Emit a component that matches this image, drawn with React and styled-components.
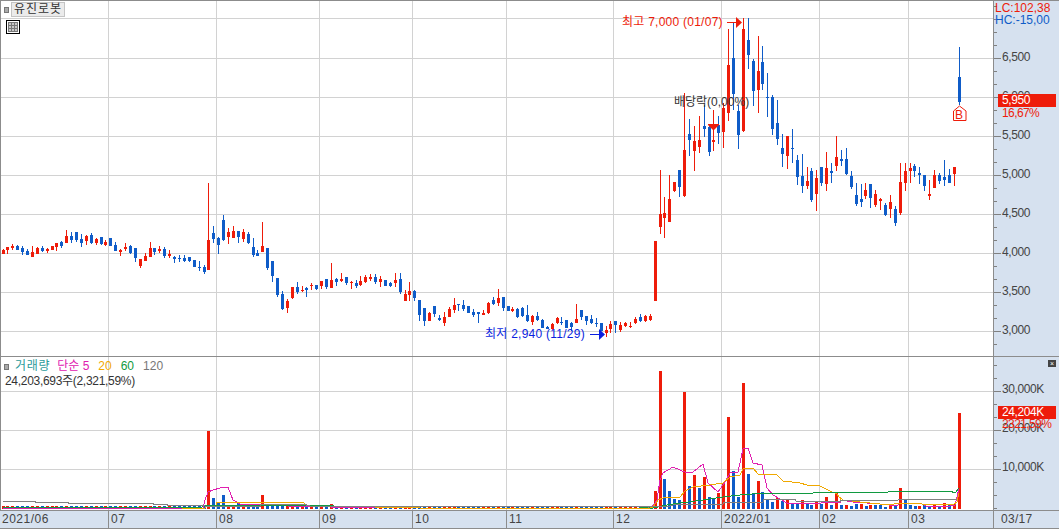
import React from "react";
import styled, { createGlobalStyle } from "styled-components";

const RED = "#ee1c0a";
const BLUE = "#0f5cc8";
const GRID = "#d2d2d2";
const EDGE = "#8c8c8c";
const AXIS_BG = "#d6e1ef";

const Global = createGlobalStyle`
  html, body { margin: 0; padding: 0; background: #fff; overflow: hidden; }
`;

const zoomed = (ox, oy, rows) =>
  rows.map(([z, c, wt, bt, bb, wb]) => ({
    x: ox + Math.floor(z / 3),
    c,
    wt: oy + Math.round(wt / 3),
    bt: oy + Math.round(bt / 3),
    bb: oy + Math.round(bb / 3),
    wb: oy + Math.round(wb / 3),
  }));
const direct = (rows) => rows.map(([x, c, wt, bt, bb, wb]) => ({ x, c, wt, bt, bb, wb }));

const candles = [
  ...zoomed(0, 180, [
    [10,"R",207,209,222,222],[22,"R",201,201,210,221],[37,"R",192,197,205,209],[52,"B",195,197,210,211],
    [67,"B",198,204,216,224],[82,"B",208,212,225,225],[97,"R",198,216,231,231],[112,"R",202,204,222,222],
    [127,"B",198,204,214,216],[142,"R",204,207,213,218],[157,"R",198,198,210,210],[170,"R",189,189,201,212],
    [185,"B",183,186,198,204],[199,"R",150,168,189,189],[214,"B",156,168,180,189],[229,"B",156,156,180,186],
    [244,"B",162,177,189,201],[259,"R",165,168,183,195],[274,"B",159,165,189,192],[289,"R",174,177,189,195],
    [304,"B",171,171,192,195],[316,"R",180,186,195,198],[331,"B",174,174,198,198],[346,"B",186,195,213,213],
    [361,"R",207,210,216,228],[376,"R",189,201,207,213],[391,"B",195,198,219,222],[406,"B",204,204,234,246],
    [421,"R",237,237,258,264],[436,"R",219,228,243,243],[451,"R",186,204,231,231],[463,"B",204,204,216,225],
    [478,"R",198,207,213,219],[493,"B",201,207,228,234],[508,"R",210,222,228,234],[523,"B",228,231,237,249],
    [538,"B",225,234,237,246],[553,"B",225,234,243,246],[568,"B",231,231,243,246],[583,"B",240,240,261,261],
    [598,"B",243,261,264,273],[613,"B",255,261,276,282],[625,"R",10,180,270,270],[640,"B",138,159,177,189],
    [655,"B",171,174,195,222],[670,"B",105,120,180,183],[685,"R",144,156,171,192],[700,"R",138,153,174,174],
    [715,"B",153,153,171,189],[730,"R",147,156,177,186],[745,"B",156,162,189,192],[760,"B",174,201,225,231],
    [772,"B",210,219,228,228],[787,"R",126,198,216,216],[802,"B",204,204,264,270],[817,"B",243,243,288,306],
    [832,"B",294,294,345,351],[847,"B",333,342,387,390],[862,"R",357,363,384,399],[877,"R",321,321,354,357],
    [892,"B",306,321,336,342],[907,"R",318,330,333,336],[919,"B",321,324,330,351],[934,"R",309,315,318,330],
    [949,"B",315,315,327,330],[964,"R",303,303,318,327],[979,"B",297,297,321,327],[994,"R",249,300,324,324],
    [1009,"B",294,297,306,318],
  ]),
  ...zoomed(330, 250, [
    [34,"R",69,87,93,96],[49,"B",81,81,99,105],[64,"R",93,96,96,117],[79,"B",90,99,108,114],[91,"R",78,93,105,108],
    [106,"R",75,81,96,99],[121,"R",72,81,87,93],[136,"B",72,81,96,102],[151,"R",78,87,96,111],[166,"B",90,90,108,108],
    [181,"B",96,99,108,111],[196,"R",69,90,99,111],[211,"B",69,87,126,132],[226,"R",120,132,153,153],[238,"R",96,123,135,153],
    [253,"B",120,123,144,153],[268,"B",150,150,195,213],[283,"B",174,174,213,228],[298,"R",186,189,213,213],[313,"B",168,168,192,201],
    [328,"B",195,204,210,213],[343,"R",186,201,219,228],[358,"R",171,177,201,201],[373,"R",144,165,180,189],[385,"B",162,162,165,183],
    [400,"B",150,165,177,183],[415,"B",168,168,189,189],[430,"B",177,186,195,201],[445,"B",186,186,192,219],[460,"R",180,189,195,195],
    [475,"R",156,159,189,192],[490,"B",141,150,162,165],[505,"R",117,144,159,168],[520,"B",141,141,174,183],[535,"B",168,168,183,183],
    [547,"R",171,177,183,186],[562,"B",174,177,201,204],[577,"B",171,174,198,201],[592,"B",165,195,213,216],[607,"R",195,198,216,225],
    [622,"B",186,198,210,213],[637,"B",207,210,234,234],[652,"B",228,231,237,237],[667,"R",219,222,237,240],[682,"R",201,204,219,222],
    [694,"B",201,216,219,225],[709,"B",210,210,234,234],[724,"B",216,219,231,243],[739,"R",162,207,219,219],[754,"B",180,180,201,210],
    [769,"B",198,198,213,225],[784,"B",195,207,219,222],[799,"B",204,219,222,231],[814,"B",219,219,243,243],[829,"R",228,240,249,261],
    [841,"R",213,222,237,249],[856,"B",213,213,225,249],[871,"R",216,225,240,246],[886,"R",216,219,228,231],[901,"R",216,228,231,234],
    [916,"R",201,207,219,222],[931,"B",192,201,213,216],[946,"R",195,198,213,216],[961,"R",192,198,210,213],
  ]),
  ...direct([
    [655,"R",241,241,301,301],[660,"R",170,214,227,234],[664,"R",197,213,218,238],[669,"R",175,199,222,222],
    [674,"R",182,182,191,192],[679,"B",170,170,187,197],[684,"R",93,150,196,197],[689,"B",119,134,140,156],
    [694,"R",126,141,151,171],[699,"R",116,140,147,153],[704,"B",105,126,129,137],[709,"B",126,127,152,156],
    [713,"R",110,140,142,151],[718,"B",116,125,133,144],[723,"R",103,108,132,148],[728,"R",29,65,113,121],
    [733,"B",22,58,94,110],[738,"B",105,111,135,149],[743,"R",18,29,131,132],[748,"B",18,40,55,69],
    [753,"B",59,61,91,106],[758,"R",36,71,90,113],[762,"B",46,62,84,90],[767,"B",73,97,98,117],
    [772,"B",95,97,129,135],[777,"B",100,123,139,145],[782,"B",134,148,154,167],[787,"R",136,136,156,169],
    [792,"B",129,148,149,163],[797,"B",155,160,177,185],[802,"B",154,176,186,193],[807,"R",167,181,186,189],
  ]),
  ...zoomed(780, 0, [
    [94,"B",504,513,600,606],[109,"R",510,534,582,633],[124,"B",501,501,549,558],[139,"R",456,504,552,573],
    [154,"B",489,513,519,549],[169,"R",408,471,498,513],[184,"B",450,477,483,498],[199,"B",444,477,522,525],
    [214,"B",513,528,561,567],[229,"B",549,585,612,618],[244,"B",552,597,606,621],[256,"R",549,570,588,597],
    [271,"B",552,552,594,624],[286,"R",570,582,615,621],[301,"R",594,597,603,630],[316,"B",609,615,645,648],
    [331,"R",585,606,627,654],[346,"B",618,627,669,678],[361,"R",489,546,639,645],[376,"R",489,513,549,573],
    [391,"R",489,504,513,549],[403,"B",492,498,513,531],[418,"B",501,519,525,552],[433,"B",525,525,558,573],
    [448,"R",540,582,588,600],[463,"R",510,525,564,564],[478,"B",519,525,543,552],[493,"B",480,531,540,558],
    [508,"B",507,525,549,549],[523,"R",501,501,522,558],[538,"B",141,231,306,315],
  ]),
];

const earlyVolume = { 42: 431, 43: 498, 44: 503, 45: 495, 46: 505, 48: 503, 53: 495, 54: 504, 57: 505, 60: 505, 67: 504 };
const volumeBars = [
  ...candles.slice(0, 133).map((k, i) => ({
    x: k.x,
    c: k.c,
    top: earlyVolume[i] ?? 506,
  })),
  ...[
    [76,"R",393],[91,"R",33],[103,"B",357],[118,"B",393],[133,"B",417],[148,"B",420],[163,"R",96],[178,"B",378],
    [193,"R",345],[208,"B",384],[223,"R",351],[238,"B",411],[250,"B",417],[265,"R",399],[280,"R",372],[295,"R",171],
    [310,"B",333],[325,"B",411],[340,"R",69],[355,"B",342],[370,"B",399],[385,"R",363],[397,"B",396],[412,"B",417],
    [427,"B",426],[442,"R",414],[457,"B",423],[472,"R",420],[487,"B",429],[502,"B",432],[517,"R",420],[532,"B",429],
    [544,"B",435],[559,"R",423],[574,"B",432],[589,"R",411],[604,"B",435],[619,"R",399],[634,"B",435],[649,"R",435],
  ].map(([z, c, t]) => ({ x: 630 + Math.floor(z / 3), c, top: 360 + Math.round(t / 3) })),
  ...[
    [33,"B",468],[48,"B",462],[63,"R",462],[78,"B",468],[90,"R",465],[105,"B",465],[120,"B",465],[135,"B",470],
    [150,"R",465],[165,"B",465],[180,"R",414],[195,"B",450],[210,"B",465],[225,"B",468],[238,"R",468],[253,"B",465],
    [268,"B",470],[283,"R",465],[298,"B",468],[313,"R",459],[328,"B",465],[343,"R",462],[358,"R",189],
  ].map(([z, c, t]) => ({ x: 840 + Math.floor(z / 3), c, top: 350 + Math.round(t / 3) })),
];

const pts = (arr) => arr.map(([x, y]) => `${x},${y}`).join(" ");
const z5 = (rows) => rows.map(([z, y]) => [Math.round(630 + z / 3), y]);
const z6 = (rows) => rows.map(([z, y]) => [Math.round(840 + z / 3), y]);

const averages = [
  {
    color: "#e020b0",
    line: [
      [3,508],[190,508],[203,508],[205,500],[208,492],[213,490],[220,488],[228,487],[233,500],[240,504],[283,504],[287,506],[330,507],[400,508],[650,508],
      ...z5([[65,507],[80,500],[90,480],[100,473],[130,467],[170,473],[190,472],[220,464],[235,483],[265,492],[285,482],[300,473],[325,472],[340,449],[355,448],[370,463],[395,465],[410,488],[430,495],[470,503],[550,504],[600,502],[630,502]]),
      ...z6([[0,500],[40,502],[120,504],[170,506],[180,503],[240,503],[265,507],[330,506],[345,505],[350,497],[358,488]]),
    ],
  },
  {
    color: "#f0a800",
    line: [
      [182,508],[205,508],[207,505],[216,505],[217,502],[303,502],[306,505],[330,506],[420,508],[650,508],
      ...z5([[70,507],[85,500],[100,498],[150,497],[165,491],[190,487],[240,485],[280,483],[300,477],[330,475],[340,469],[370,468],[385,474],[440,475],[460,481],[510,483],[530,485],[570,486],[600,491],[620,494],[630,498]]),
      ...z6([[0,497],[10,500],[60,502],[120,504],[150,505],[175,503],[245,504],[340,505],[350,502],[358,493]]),
    ],
  },
  {
    color: "#109a40",
    line: [
      [3,507],[202,507],[204,505],[330,505],[334,506],[640,507],[650,508],
      ...z5([[70,508],[110,505],[150,503],[220,500],[280,497],[330,495],[405,493],[550,493],[552,492],[630,492]]),
      ...z6([[0,492],[145,492],[147,491],[330,491],[345,493],[358,488]]),
    ],
  },
  {
    color: "#808080",
    line: [
      [3,501],[35,501],[35,502],[68,502],[68,503],[153,503],[153,504],[167,504],[167,505],[202,505],[205,506],[260,506],[260,504],[303,504],[310,506],[640,506],[648,507],
      ...z5([[55,506],[110,507],[130,505],[190,504],[280,504],[282,502],[400,502],[402,499],[495,499],[497,501],[630,501]]),
      ...z6([[0,500],[175,500],[177,499],[350,499]]),
    ],
  },
];

const priceTicks = [
  [6500, 58], [6000, 97], [5500, 136], [5000, 175], [4500, 214], [4000, 253], [3500, 292], [3000, 331],
].map(([v, y]) => ({ label: v.toLocaleString("en-US"), y }));
const volumeTicks = [
  { label: "30,000K", y: 391 },
  { label: "20,000K", y: 430 },
  { label: "10,000K", y: 469 },
];
const VERTICALS = [108, 216, 319, 412, 506, 613, 721, 819, 908];
const months = [
  { label: "2021/06", from: 0, to: 108 },
  { label: "07", from: 108, to: 216 },
  { label: "08", from: 216, to: 319 },
  { label: "09", from: 319, to: 412 },
  { label: "10", from: 412, to: 506 },
  { label: "11", from: 506, to: 613 },
  { label: "12", from: 613, to: 721 },
  { label: "2022/01", from: 721, to: 819 },
  { label: "02", from: 819, to: 908 },
  { label: "03", from: 908, to: 993 },
];

const Page = styled.div`
  width: 1059px;
  height: 529px;
  display: flex;
  flex-direction: column;
  box-sizing: border-box;
  border-left: 1px solid ${EDGE};
  font-family: "Liberation Sans", "Noto Sans CJK KR", sans-serif;
  font-size: 12px;
  line-height: 13px;
  color: #333;
`;
const PanelRow = styled.section`
  display: flex;
  height: ${(p) => p.$height}px;
  flex: none;
  border-top: ${(p) => (p.$top ? 1 : 0)}px solid ${EDGE};
  box-sizing: border-box;
`;
const Canvas = styled.div`
  position: relative;
  width: 992px;
  flex: none;
  overflow: hidden;
`;
const Drawing = styled.svg`
  display: block;
`;
const Axis = styled.aside`
  position: relative;
  flex: 1;
  background: ${AXIS_BG};
  border-left: 1px solid ${EDGE};
  overflow: hidden;
`;
const AxisLabel = styled.span`
  position: absolute;
  left: 8px;
  color: #444;
  white-space: nowrap;
  letter-spacing: -0.4px;
`;
const Ratio = styled.div`
  position: absolute;
  left: 1px;
  top: ${(p) => p.$top}px;
  color: ${(p) => p.$color};
  white-space: nowrap;
`;
const PriceFlag = styled.div`
  position: absolute;
  left: 4px;
  top: ${(p) => p.$top}px;
  width: 58px;
  height: 13px;
  background: ${RED};
  color: #fff;
  padding-left: 4px;
  box-sizing: border-box;
  line-height: 13px;
  letter-spacing: -0.4px;
`;
const FlagNote = styled.div`
  position: absolute;
  left: 8px;
  top: ${(p) => p.$top}px;
  color: ${RED};
  white-space: nowrap;
  letter-spacing: -0.6px;
`;
const CloseBox = styled.div`
  position: absolute;
  left: 54px;
  top: 3px;
  width: 8px;
  height: 7px;
  background: #444;
  color: #fff;
  font-size: 7px;
  line-height: 7px;
  text-align: center;
`;
const Toolbar = styled.div`
  position: absolute;
  left: 3px;
  top: 1px;
  display: flex;
  align-items: center;
  gap: 2px;
`;
const Marker = styled.i`
  display: block;
  width: 3px;
  height: 4px;
  background: #aaa;
  border: 1px solid #777;
`;
const NameButton = styled.button`
  width: 54px;
  height: 15px;
  padding: 0;
  border: 1px solid #c4c4c4;
  background: #ebebeb;
  color: #333;
  font: inherit;
  letter-spacing: 1px;
  line-height: 13px;
`;
const TableIcon = styled.svg`
  position: absolute;
  left: 5px;
  top: 19px;
`;
const Note = styled.div`
  position: absolute;
  left: ${(p) => p.$left}px;
  top: ${(p) => p.$top}px;
  color: ${(p) => p.$color};
  white-space: nowrap;
  letter-spacing: ${(p) => p.$spacing ?? 0}px;
`;
const Legend = styled.div`
  position: absolute;
  left: 3px;
  top: 3px;
`;
const LegendRow = styled.div`
  display: flex;
  align-items: center;
`;
const LegendName = styled.span`
  color: ${(p) => p.$color};
  margin-left: ${(p) => p.$gap}px;
  letter-spacing: ${(p) => p.$spacing ?? 0}px;
`;
const VolumeText = styled.div`
  margin-left: 1px;
  margin-top: 2px;
  letter-spacing: -0.3px;
`;
const DateBar = styled.footer`
  display: flex;
  height: 19px;
  flex: none;
  box-sizing: border-box;
  background: ${AXIS_BG};
  border-top: 1px solid ${EDGE};
  border-bottom: 1px solid ${EDGE};
  margin-left: -1px;
  color: #444;
  letter-spacing: 0.5px;
`;
const DateCell = styled.div`
  box-sizing: border-box;
  padding: 2px 0 0 2px;
  border-left: ${(p) => (p.$first ? 0 : 1)}px solid ${EDGE};
  flex: none;
`;
const LastDate = styled(DateCell)`
  flex: 1;
  padding-left: 7px;
  letter-spacing: 0.3px;
`;

const GridLines = ({ rows, y0, y1 }) => (
  <g fill={GRID}>
    {rows.map((y) => <rect key={y} x={0} y={y} width={993} height={1} />)}
    {VERTICALS.map((x) => <rect key={x} x={x} y={y0} width={1} height={y1 - y0} />)}
  </g>
);

const Candle = ({ x, c, wt, bt, bb, wb }) => {
  const color = c === "R" ? RED : BLUE;
  return (
    <g fill={color}>
      <rect x={x} y={wt} width={1} height={Math.max(wb - wt, 1)} />
      <rect x={x - 1} y={bt} width={3} height={Math.max(bb - bt, 1)} />
    </g>
  );
};

const AxisTicks = ({ y0, y1, base, majors }) => {
  const ticks = [];
  for (let y = base; y >= y0; y -= 13) ticks.push(y);
  for (let y = base + 13; y <= y1; y += 13) ticks.push(y);
  return (
    <Drawing width={65} height={y1 - y0} viewBox={`994 ${y0} 65 ${y1 - y0}`} shapeRendering="crispEdges">
      <g fill="#808080">
        {ticks.map((y) => <rect key={y} x={994} y={y} width={majors.includes(y) ? 7 : 3} height={1} />)}
      </g>
    </Drawing>
  );
};

export default function App() {
  return (
    <Page>
      <Global />
      <PanelRow $height={356} $top>
        <Canvas>
          <Drawing width={992} height={355} viewBox="1 1 992 355" shapeRendering="crispEdges">
            <GridLines rows={[18, 58, 97, 136, 175, 214, 253, 292, 331]} y0={1} y1={356} />
            {candles.map((k, i) => <Candle key={i} {...k} />)}
            <g fill={RED}>
              <rect x={727} y={22} width={10} height={1} />
              <path d="M736 17 L742 22.5 L736 28 Z" shapeRendering="auto" />
              <path d="M708 124 H719 V125 L714 130 H713 L708 125 Z" shapeRendering="auto" />
            </g>
            <g fill="#0a1fe0">
              <rect x={590} y={334} width={10} height={1} />
              <path d="M599 329 L605 334.5 L599 340 Z" shapeRendering="auto" />
            </g>
            <path d="M959.5 106 L966 111 V120.5 H953.5 V111 Z" fill="#fff" stroke={RED} shapeRendering="auto" />
          </Drawing>
          <Toolbar>
            <Marker />
            <NameButton>유진로봇</NameButton>
          </Toolbar>
          <TableIcon width={14} height={14} viewBox="0 0 14 14" shapeRendering="crispEdges">
            <rect x={0.5} y={0.5} width={13} height={13} fill="#fff" stroke="#000" />
            <rect x={2} y={2} width={10} height={10} fill="#c8c8c8" stroke="none" />
            <path d="M2 2.5H12M2 5.5H12M2 8.5H12M2 11.5H12M2.5 2V12M5.5 2V12M8.5 2V12M11.5 2V12" stroke="#777" fill="none" />
          </TableIcon>
          <Note $left={621} $top={15} $color={RED} $spacing={0.25}>최고 7,000 (01/07)</Note>
          <Note $left={673} $top={95} $color="#333">배당락(0,00%)</Note>
          <Note $left={484} $top={327} $color="#0a1fe0" $spacing={0.25}>최저 2,940 (11/29)</Note>
          <Note $left={954} $top={108} $color={RED}>B</Note>
        </Canvas>
        <Axis>
          <AxisTicks y0={1} y1={356} base={58} majors={priceTicks.map((t) => t.y)} />
          {priceTicks.map((t) => (
            <AxisLabel key={t.label} style={{ top: t.y - 8 }}>{t.label}</AxisLabel>
          ))}
          <Ratio $top={1} $color={RED}>LC:102,38</Ratio>
          <Ratio $top={13} $color={BLUE}>HC:-15,00</Ratio>
          <PriceFlag $top={93}>5,950</PriceFlag>
          <FlagNote $top={106}>16,67%</FlagNote>
        </Axis>
      </PanelRow>
      <PanelRow $height={154} $top>
        <Canvas>
          <Drawing width={992} height={153} viewBox="1 357 992 153" shapeRendering="crispEdges">
            <GridLines rows={[391, 430, 469]} y0={357} y1={510} />
            {volumeBars.map((b, i) => (
              <rect key={i} x={b.x - 1} y={b.top} width={3} height={509 - b.top} fill={b.c === "R" ? RED : BLUE} />
            ))}
            {averages.map((a) => (
              <polyline key={a.color} points={pts(a.line)} fill="none" stroke={a.color} strokeWidth={1} />
            ))}
          </Drawing>
          <Legend>
            <LegendRow>
              <Marker />
              <LegendName $color="#2a9a9a" $gap={6} $spacing={0.7}>거래량</LegendName>
              <LegendName $color="#e020b0" $gap={7}>단순 5</LegendName>
              <LegendName $color="#f0a800" $gap={9}>20</LegendName>
              <LegendName $color="#109a40" $gap={9}>60</LegendName>
              <LegendName $color="#777" $gap={9}>120</LegendName>
            </LegendRow>
            <VolumeText>24,203,693주(2,321,59%)</VolumeText>
          </Legend>
        </Canvas>
        <Axis>
          <AxisTicks y0={357} y1={510} base={391} majors={volumeTicks.map((t) => t.y)} />
          {volumeTicks.map((t) => (
            <AxisLabel key={t.label} style={{ top: t.y - 365 }}>{t.label}</AxisLabel>
          ))}
          <CloseBox>×</CloseBox>
          <PriceFlag $top={49}>24,204K</PriceFlag>
          <FlagNote $top={61}>2321,59%</FlagNote>
        </Axis>
      </PanelRow>
      <DateBar>
        {months.map((m, i) => (
          <DateCell key={m.label} $first={i === 0} style={{ width: m.to - m.from }}>{m.label}</DateCell>
        ))}
        <LastDate>03/17</LastDate>
      </DateBar>
    </Page>
  );
}
